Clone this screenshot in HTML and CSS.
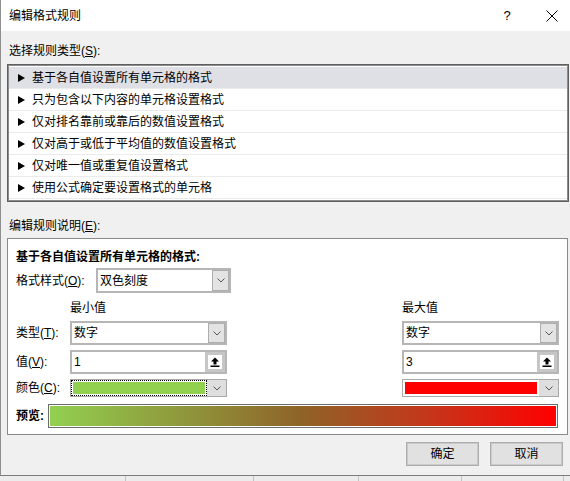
FILE: index.html
```html
<!DOCTYPE html>
<html lang="zh-CN">
<head>
<meta charset="utf-8">
<title>编辑格式规则</title>
<link rel="stylesheet" href="styles.css">
</head>
<body>
<div class="dialog">
  <div class="titlebar">
    <span class="title">编辑格式规则</span>
    <span class="tb-help">?</span>
    <span class="tb-close">
      <svg width="12" height="12" viewBox="0 0 12 12"><path d="M0.5 0.5 L11.5 11.5 M11.5 0.5 L0.5 11.5" stroke="#000" stroke-width="1" fill="none"/></svg>
    </span>
  </div>
  <div class="body">
    <div class="label label-top">选择规则类型(<u>S</u>):</div>
    <ul class="rule-list">
      <li class="rule selected"><i class="tri"></i>基于各自值设置所有单元格的格式</li>
      <li class="rule"><i class="tri"></i>只为包含以下内容的单元格设置格式</li>
      <li class="rule"><i class="tri"></i>仅对排名靠前或靠后的数值设置格式</li>
      <li class="rule"><i class="tri"></i>仅对高于或低于平均值的数值设置格式</li>
      <li class="rule"><i class="tri"></i>仅对唯一值或重复值设置格式</li>
      <li class="rule"><i class="tri"></i>使用公式确定要设置格式的单元格</li>
    </ul>
    <div class="label label-desc">编辑规则说明(<u>E</u>):</div>
    <div class="panel">
      <div class="panel-title">基于各自值设置所有单元格的格式:</div>
      <div class="style-row">
        <span class="style-label">格式样式(<u>O</u>):</span>
        <div class="combo combo-style">
          <span class="combo-text">双色刻度</span>
          <span class="combo-btn"><svg width="8" height="5" viewBox="0 0 8 5"><polyline points="0.5,0.5 4,4 7.5,0.5" fill="none" stroke="#555" stroke-width="1"/></svg></span>
        </div>
      </div>
      <div class="grid">
        <span class="head head-min">最小值</span>
        <span class="head head-max">最大值</span>

        <span class="row-label">类型(<u>T</u>):</span>
        <div class="combo">
          <span class="combo-text">数字</span>
          <span class="combo-btn"><svg width="8" height="5" viewBox="0 0 8 5"><polyline points="0.5,0.5 4,4 7.5,0.5" fill="none" stroke="#555" stroke-width="1"/></svg></span>
        </div>
        <div class="combo col-max">
          <span class="combo-text">数字</span>
          <span class="combo-btn"><svg width="8" height="5" viewBox="0 0 8 5"><polyline points="0.5,0.5 4,4 7.5,0.5" fill="none" stroke="#555" stroke-width="1"/></svg></span>
        </div>

        <span class="row-label">值(<u>V</u>):</span>
        <div class="field">
          <span class="field-text">1</span>
          <span class="ref-btn"><span class="ref-icon"><svg width="14" height="14" viewBox="0 0 14 14"><polygon points="7,2.5 11,6.5 8.5,6.5 8.5,9.5 5.5,9.5 5.5,6.5 3,6.5" fill="#000"/><rect x="2.5" y="10.5" width="9" height="1.5" fill="#000"/></svg></span></span>
        </div>
        <div class="field col-max">
          <span class="field-text">3</span>
          <span class="ref-btn"><span class="ref-icon"><svg width="14" height="14" viewBox="0 0 14 14"><polygon points="7,2.5 11,6.5 8.5,6.5 8.5,9.5 5.5,9.5 5.5,6.5 3,6.5" fill="#000"/><rect x="2.5" y="10.5" width="9" height="1.5" fill="#000"/></svg></span></span>
        </div>

        <span class="row-label">颜色(<u>C</u>):</span>
        <div class="color-combo">
          <span class="swatch-box focus"><span class="swatch green"></span></span>
          <span class="color-btn"><svg width="8" height="5" viewBox="0 0 8 5"><polyline points="0.5,0.5 4,4 7.5,0.5" fill="none" stroke="#555" stroke-width="1"/></svg></span>
        </div>
        <div class="color-combo col-max">
          <span class="swatch-box"><span class="swatch red"></span></span>
          <span class="color-btn"><svg width="8" height="5" viewBox="0 0 8 5"><polyline points="0.5,0.5 4,4 7.5,0.5" fill="none" stroke="#555" stroke-width="1"/></svg></span>
        </div>
      </div>
      <div class="preview-row">
        <span class="preview-label">预览:</span>
        <div class="preview-box"><div class="preview-grad"></div></div>
      </div>
    </div>
    <div class="buttons">
      <button class="btn">确定</button>
      <button class="btn">取消</button>
    </div>
  </div>
</div>
<div class="sheet-strip">
  <span class="cell c1"></span><span class="cell c2"></span><span class="cell c3"></span><span class="cell c4"></span><span class="cell c5"></span><span class="cell c6"></span>
</div>
</body>
</html>
```

FILE: styles.css
```css
* { box-sizing: border-box; margin: 0; padding: 0; }
html, body { width: 570px; height: 481px; overflow: hidden; }
body {
  background: #e9e9e9;
  font-family: "Liberation Sans", "Noto Sans CJK SC", sans-serif;
  font-size: 12px;
  line-height: 16px;
  color: #000;
}
u { text-decoration: underline; text-underline-offset: 1px; }

.dialog {
  height: 476px;
  border-left: 1px solid #8f8f8f;
  border-bottom: 1px solid #7c7c7c;
  background: #f0f0f0;
  display: flex;
  flex-direction: column;
}
.titlebar {
  flex: none;
  height: 31px;
  background: #fff;
  display: flex;
  align-items: center;
  padding: 0 3px 0 8px;
}
.title { flex: 1; }
.tb-help { width: 30px; text-align: center; font-size: 13px; }
.tb-close { width: 30px; margin-left: 15px; display: flex; justify-content: center; }
.tb-close svg { display: block; }

.body {
  flex: 1;
  display: flex;
  flex-direction: column;
  padding: 12px 1px 9px 6px;
}
.label { height: 16px; padding-left: 2px; }
.label-top { margin-bottom: 5px; }
.label-desc { margin-top: 16px; margin-bottom: 4px; }

.rule-list {
  list-style: none;
  height: 138px;
  background: #fff;
  border: 1px solid #5f5f5f;
  box-shadow: inset 0 0 0 1px #8c8c8c;
  padding: 2px 1px;
}
.rule {
  height: 22px;
  border-bottom: 1px solid #ebebeb;
  display: flex;
  align-items: center;
  padding-left: 9px;
}
.rule.selected { background: #dfdfe6; }
.tri {
  width: 0; height: 0;
  border-left: 7px solid #000;
  border-top: 4px solid transparent;
  border-bottom: 4px solid transparent;
  margin-right: 7px;
}

.panel {
  height: 197px;
  margin-right: 1px;
  background: #fff;
  border: 1px solid #8a8a8a;
  padding: 9px 8px 0 8px;
}
.panel-title { font-weight: bold; line-height: 18px; height: 18px; }
.style-row { margin-top: 2px; height: 25px; display: flex; align-items: center; }
.style-label { width: 80px; }

.combo {
  display: flex;
  height: 24px;
  border: 2px solid #b6b6b6;
  background: #fff;
}
.combo-style { width: 135px; height: 25px; }
.combo-text { flex: 1; padding-left: 2px; display: flex; align-items: center; }
.combo-btn {
  width: 17px;
  background: #e3e3e3;
  border: 1px solid #adadad;
  display: flex;
  align-items: center;
  justify-content: center;
}
.combo-btn svg, .color-btn svg { display: block; }

.grid {
  margin-top: 8px;
  display: grid;
  grid-template-columns: 54px 157px 1fr 157px;
  grid-template-rows: 15px 24px 24px 18px;
  row-gap: 5px;
  align-items: center;
}
.head { line-height: 15px; }
.head-min { grid-column: 2; }
.head-max { grid-column: 4; }
.row-label { grid-column: 1; }
.col-max { grid-column: 4; }

.field {
  display: flex;
  height: 24px;
  border: 2px solid #b6b6b6;
  background: #fff;
}
.field-text { flex: 1; padding-left: 2px; display: flex; align-items: center; }
.ref-btn {
  width: 20px;
  background: #c6c6c6;
  padding: 3px;
}
.ref-icon { display: block; width: 14px; height: 14px; background: #fff; }
.ref-icon svg { display: block; }

.color-combo {
  display: flex;
  height: 18px;
  border: 1px solid #a9a9a9;
  background: #fff;
}
.swatch-box { flex: 1; border: 1px solid transparent; padding: 1px; display: flex; }
.swatch-box.focus { border: 1px dotted #000; }
.swatch { flex: 1; }
.swatch.green { background: #92d050; }
.swatch.red { background: #ff0000; }
.color-btn {
  width: 19px;
  background: #dedede;
  display: flex;
  align-items: center;
  justify-content: center;
}

.preview-row { margin-top: 7px; height: 24px; display: flex; align-items: center; }
.preview-label { width: 32px; font-weight: bold; }
.preview-box {
  flex: 1;
  height: 24px;
  margin-right: 1px;
  border: 1px solid #6b6b6b;
  padding: 1px;
  background: #fff;
}
.preview-grad {
  height: 100%;
  background: linear-gradient(to right, #92d050 0%, #8f9a3c 25%, #8f6228 50%, #c5361a 75%, #ff0000 100%);
}

.buttons {
  margin-top: 7px;
  display: flex;
  justify-content: flex-end;
  gap: 11px;
  margin-right: 6px;
}
.btn {
  width: 73px;
  height: 24px;
  font: inherit;
  color: #000;
  background: #e1e1e1;
  border: 1px solid #adadad;
  box-shadow: inset 0 0 0 1px #c9c9c9;
}

.sheet-strip { height: 5px; display: flex; background: #ececec; }
.cell { height: 5px; border-right: 1px solid #c2c2c2; }
.c1 { width: 126px; }
.c2 { width: 128px; }
.c3 { width: 105px; }
.c4 { width: 103px; }
.c5 { width: 102px; }
.c6 { flex: 1; border-right: none; }
```
